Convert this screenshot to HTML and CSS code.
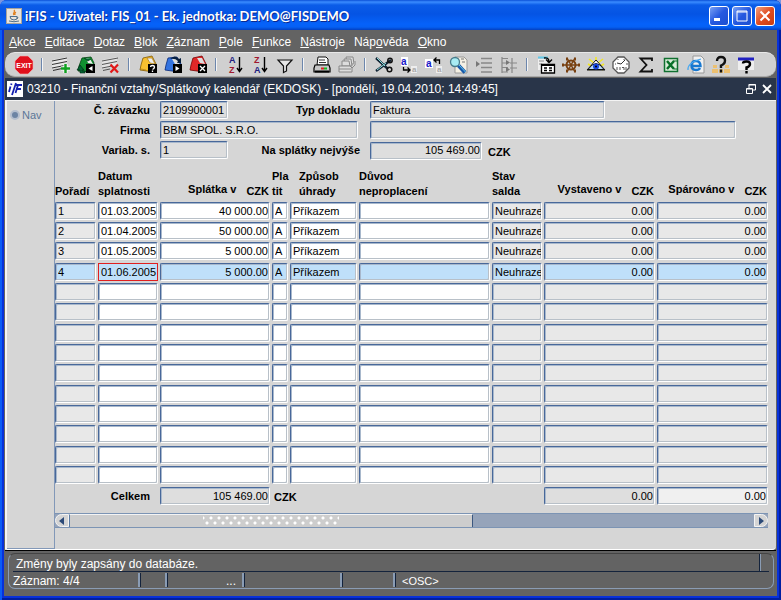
FILE: index.html
```
<!DOCTYPE html>
<html lang="cs">
<head>
    <meta charset="UTF-8">
    <meta name="viewport" content="width=device-width, initial-scale=1.0">
    <title>iFIS - Splátkový kalendář</title>
    <link rel="stylesheet" href="styles.css">
</head>
<body>
<div class="window">
    <header class="titlebar">
        <svg class="app-icon" width="16" height="16" viewBox="0 0 16 16"><rect x="0.5" y="0.5" width="15" height="15" fill="#e8e4dc" stroke="#a8a49c"/><path d="M8 2c2 2-2 3 0 5M10 4c-2 1-1 2-1 3" stroke="#e0801e" stroke-width="1.3" fill="none"/><path d="M4 8.500h7v2.500q-3 2-6 0zM11 9q2 0 0 2M3 13q5 1.500 10 0" stroke="#50708c" fill="none"/></svg>
        <h1>iFIS - Uživatel: FIS_01 - Ek. jednotka: DEMO@FISDEMO</h1>
        <button class="win-btn" aria-label="Minimalizovat"><svg width="18" height="18" viewBox="0 0 18 18"><path d="M4 12.500h6" stroke="#fff" stroke-width="3"/></svg></button>
        <button class="win-btn" aria-label="Maximalizovat"><svg width="18" height="18" viewBox="0 0 18 18"><path d="M4 4h10v10H4zM4 5h10" stroke="#fff" fill="none"/></svg></button>
        <button class="win-btn win-close" aria-label="Zavřít"><svg width="18" height="18" viewBox="0 0 18 18"><path d="M4.500 4.500l9 9M13.500 4.500l-9 9" stroke="#fff" stroke-width="2"/></svg></button>
    </header>

    <div class="frame">
        <nav class="menu">
            <a href="#"><u>A</u>kce</a>
            <a href="#"><u>E</u>ditace</a>
            <a href="#"><u>D</u>otaz</a>
            <a href="#"><u>B</u>lok</a>
            <a href="#"><u>Z</u>áznam</a>
            <a href="#"><u>P</u>ole</a>
            <a href="#"><u>F</u>unkce</a>
            <a href="#"><u>N</u>ástroje</a>
            <a href="#">Náp<u>o</u>věda</a>
            <a href="#"><u>O</u>kno</a>
        </nav>

        <div class="toolbar">
            <button aria-label="Konec"><svg viewBox="0 0 20 20"><path d="M6 1h8l5 5v8l-5 5H6l-5-5V6z" fill="#e0101c" stroke="#f4b0b0" stroke-width="0.6"/><text x="10" y="12.500" text-anchor="middle" class="exit-text">EXIT</text></svg></button>
            <span class="sep"></span>
            <button aria-label="Nový záznam"><svg viewBox="0 0 20 20"><path d="M1 5l15-3v9L1 14z" fill="#e8e8e8"/><path d="M1 6l15-3M1 9.500l15-3M1 13l15-3M2 15.500l9-2" stroke="#333" fill="none"/><path d="M14.500 9v9M10 13.500h9" stroke="#fff" stroke-width="4"/><path d="M14.500 9v9M10 13.500h9" stroke="#10a020" stroke-width="2.500"/></svg></button>
            <button aria-label="Předchozí blok"><svg viewBox="0 0 20 20"><path d="M6 3l9-1 3 6-2 9-14-1 1-5z" fill="#109030" stroke="#034010" stroke-width="0.800"/><path d="M10 3l4 1 3 5-5-1z" fill="#eee"/><path d="M8 3l4 3 3-2M4 10L1 15h3v3h5v-2H6v-1h2z" fill="#063" stroke="#021" stroke-width="0.600"/><path d="M10 9h9v9h-9z" fill="#000"/><path d="M16.500 11v5l-4-2.500z" fill="#fff"/></svg></button>
            <button aria-label="Smazat záznam"><svg viewBox="0 0 20 20"><path d="M1 5l15-3v9L1 14z" fill="#e4e4e4"/><path d="M1 6l16-3M1 9.500l15-3M1 13l10-2M2 15.500l7-1.500" stroke="#555" fill="none"/><path d="M9.500 9.500l7.500 8M17 9.500l-7.500 8" stroke="#e21818" stroke-width="2.200"/></svg></button>
            <span class="sep"></span>
            <button aria-label="Zadat dotaz"><svg viewBox="0 0 20 20"><path d="M5 3l9-2 4 8-2 8-14-2 1-5z" fill="#f8c030" stroke="#805800" stroke-width="0.800"/><path d="M9 3l5 0 3 6-5-1zM3 14l5 1" fill="#eee" stroke="#a87818" stroke-width="0.700"/><path d="M10 9h9v9h-9z" fill="#000"/><path d="M12.500 12q0-1.500 2-1.500t2 1.500-2 2.500M14.500 15.500v1.500" fill="none" stroke="#fff" stroke-width="1.300"/></svg></button>
            <button aria-label="Provést dotaz"><svg viewBox="0 0 20 20"><path d="M5 3l9-1 4 7-2 8-14-2 1-5z" fill="#3474e0" stroke="#082878" stroke-width="0.800"/><path d="M9 4l5 0 3 6-5-1z" fill="#ddd"/><path d="M7 4q5-5 9 0l2-1v5h-4l1-2q-3-3-8-2" fill="#082040"/><path d="M10 9h9v9h-9z" fill="#000"/><path d="M12.500 11v5l4-2.500z" fill="#fff"/></svg></button>
            <button aria-label="Zrušit dotaz"><svg viewBox="0 0 20 20"><path d="M5 3l9-2 4 8-2 8-14-2 1-5z" fill="#e02828" stroke="#700" stroke-width="0.800"/><path d="M9 3l5 0 3 6-5-1z" fill="#ddd"/><path d="M10 9h9v9h-9z" fill="#000"/><path d="M12 11l5 5M17 11l-5 5" stroke="#fff" stroke-width="1.300"/></svg></button>
            <span class="sep"></span>
            <button aria-label="Seřadit vzestupně"><svg viewBox="0 0 20 20"><text x="4" y="8" class="sort-text blue">A</text><text x="4" y="18" class="sort-text red">Z</text><path d="M14.500 2v14M12 13l2.500 3.500 2.500-3.500" stroke="#000" stroke-width="1.400" fill="none"/></svg></button>
            <button aria-label="Seřadit sestupně"><svg viewBox="0 0 20 20"><text x="4" y="8" class="sort-text red">Z</text><text x="4" y="18" class="sort-text blue">A</text><path d="M14.500 2v14M12 13l2.500 3.500 2.500-3.500" stroke="#000" stroke-width="1.400" fill="none"/></svg></button>
            <button aria-label="Filtr"><svg viewBox="0 0 20 20"><path d="M3 5h14l-5.500 6v5l-3 1.500V11z" fill="#e8e8e8" stroke="#111" stroke-width="1.200"/></svg></button>
            <span class="sep"></span>
            <button aria-label="Tisk"><svg viewBox="0 0 20 20"><path d="M6 2h8l2 2v6H5z" fill="#fff" stroke="#111"/><path d="M7 5h6M7 7.500h7" stroke="#333"/><path d="M3 10h14l1 3v4H2v-4z" fill="#c8c8c8" stroke="#000" stroke-width="1.200"/><path d="M3 16.500h14" stroke="#000" stroke-width="2"/><path d="M9 13.500h3" stroke="#d22" stroke-width="2"/><path d="M12 13.500h3" stroke="#1b2" stroke-width="2"/></svg></button>
            <button aria-label="Tisk více"><svg viewBox="0 0 20 20" fill="#ddd" stroke="#888"><path d="M9 2h7l1 7h-7z"/><path d="M7 4h7l1 7H8z"/><path d="M5 6h7l1 5H5z"/><path d="M2 11h11l2 2v4H2zM2 14h12M15 13l3-3v-4"/></svg></button>
            <span class="sep"></span>
            <button aria-label="Vyjmout"><svg viewBox="0 0 20 20"><path d="M2 3l12 11M2 16L17 5" stroke="#123" stroke-width="2.400"/><path d="M3 3l8 8M3 15l9-7" stroke="#8dd" stroke-width="1"/><circle cx="16" cy="5.500" r="2.200" fill="none" stroke="#111" stroke-width="1.500"/><circle cx="15.500" cy="14.500" r="2.300" fill="none" stroke="#111" stroke-width="1.500"/></svg></button>
            <button aria-label="Kopírovat"><svg viewBox="0 0 20 20"><path d="M2 2h7v9H2z" fill="#fff"/><path d="M12 11h6v7h-6z" fill="#eee"/><text x="2" y="10" class="copy-text">a</text><text x="13" y="17" class="copy-text gray">a</text><path d="M4.500 12v3h6M8.500 12.500l2.500 2.500-2.500 2.500" fill="none" stroke="#000" stroke-width="1.300"/></svg></button>
            <button aria-label="Vložit"><svg viewBox="0 0 20 20"><path d="M1 4h8v9H1z" fill="#fff"/><path d="M12 11h6v7h-6z" fill="#eee"/><text x="2" y="12" class="copy-text">a</text><text x="13" y="17" class="copy-text gray">a</text><path d="M15.500 9V5h-5M12.500 2.500L10 5l2.500 2.500" fill="none" stroke="#000" stroke-width="1.300"/></svg></button>
            <button aria-label="Hledat"><svg viewBox="0 0 20 20"><path d="M6 2h9l3 3v13H6z" fill="#f4f0e4" stroke="#999"/><path d="M12 4h3M13 7h3" stroke="#777"/><circle cx="6" cy="7" r="4.500" fill="#a8ecf4" stroke="#487c8c" stroke-width="1.300"/><path d="M9.500 10.500l6.500 7" stroke="#1858a8" stroke-width="4"/><path d="M10 10l6.500 7" stroke="#60c8f0"/></svg></button>
            <button aria-label="Vložit řádek"><svg viewBox="0 0 20 20"><path d="M7 3.500h11M7 8h11M7 12.500h11M7 17h11" stroke="#888" stroke-width="1.300"/><path d="M2 6v6l4-3z" fill="#777"/></svg></button>
            <button aria-label="Rozdělit řádek"><svg viewBox="0 0 20 20"><path d="M3 2v16M3 3.500h6M3 8h6M3 12.500h6M3 17h6M13 3v15M11 8h7M11 13h7" stroke="#888" stroke-width="1.200"/><path d="M7 5v5l4-2.500zM7 12v5l4-2.500z" fill="#777"/></svg></button>
            <span class="sep"></span>
            <button aria-label="Seznam hodnot"><svg viewBox="0 0 20 20"><path d="M2 2.500h10" stroke="#60c8e8" stroke-width="2"/><path d="M2 4h9v11H2z" fill="#eee"/><path d="M3 6h5M3 9h3" stroke="#888"/><path d="M5.500 9.500h13v8.500h-13z" fill="#fff" stroke="#000" stroke-width="1.300"/><path d="M5 10h14" stroke="#000" stroke-width="2"/><path d="M8 13h3M13 13h3M8 15.500h3M13 15.500h3" stroke="#000" stroke-width="1.300"/><path d="M8 3q5-1 5 4M10 4.500l3 3 3-3" stroke="#000" fill="none" stroke-width="1.300"/></svg></button>
            <button aria-label="Navigace"><svg viewBox="0 0 20 20" fill="none" stroke="#784010"><circle cx="10" cy="10" r="4.500" stroke-width="2"/><path d="M2 10h16M6 3l8 14M14 3L6 17" stroke-width="1.500"/><path d="M1 10h2M17 10h2M5 4h2M13 4h2M5 16h2M13 16h2" stroke-width="3"/></svg></button>
            <button aria-label="Zobrazit"><svg viewBox="0 0 20 20"><path d="M3 4l14 11M17 4L3 15M10 2v4M2 9l5 3M18 9l-5 3" stroke="#f4e820" stroke-width="1.500"/><path d="M10 5l9 10H1z" fill="#fff" stroke="#111"/><path d="M2 14.500q8-12 16 0z" fill="#b8dcff" stroke="#111"/><circle cx="10" cy="11.500" r="3" fill="#1848e0"/><circle cx="10" cy="11.500" r="1"/></svg></button>
            <button aria-label="Čas"><svg viewBox="0 0 20 20"><path d="M7 2h6l5 5v6l-5 5H7l-5-5V7z" fill="#fff" stroke="#555" stroke-width="1.300"/><path d="M6 8l4 1 4-4" stroke="#333" fill="none"/><path d="M6 12v3M9 12v3M11 12.500h2v2.500M15 12v3M4 9h1M15 9h2M7 4v1M13 4v1" stroke="#555" fill="none"/></svg></button>
            <button aria-label="Součet"><svg viewBox="0 0 20 20"><path d="M16 6V3.500H4.500l6 6.500-6 6.500H16V14" fill="none" stroke="#111" stroke-width="1.800"/></svg></button>
            <button aria-label="Export do Excelu"><svg viewBox="0 0 20 20"><path d="M3.500 3.500h13v13h-13z" fill="#d8ecd8" stroke="#107030" stroke-width="1.500"/><path d="M6 6l7 8M13 6l-7 8" stroke="#087028" stroke-width="2.500"/><path d="M12 6h4M13 14h3" stroke="#087028"/></svg></button>
            <button aria-label="Internet"><svg viewBox="0 0 20 20"><path d="M7 1h8l3 3v14H7z" fill="#f0f0f0" stroke="#999"/><path d="M4.500 11h10q0-5-4.500-5t-4.500 4.500T10 15q3 0 4-2" fill="none" stroke="#1878d0" stroke-width="2.400"/><path d="M2 15Q1 8 15 4" fill="none" stroke="#48a8f0" stroke-width="1.300"/></svg></button>
            <button aria-label="Nápověda k poli"><svg viewBox="0 0 20 20"><path d="M2 10h4v3H2zM14 10h4v3h-4zM1 14h6v4H1zM13 14h6v4h-6zM8 14h4v4H8z" fill="#ecc070"/><path d="M6 6q0-4 4-4t4 3.500-4 5V13M10 14.500v3" fill="none" stroke="#111" stroke-width="2.400"/></svg></button>
            <button aria-label="Nápověda"><svg viewBox="0 0 20 20"><path d="M2 3h16v12H2z" fill="#eee"/><path d="M2 4h16" stroke="#2020c0" stroke-width="3"/><path d="M7 8.500q0-2 3.500-2t3.500 2.500-3.500 3.500V15M10.500 16v2.500" fill="none" stroke="#000" stroke-width="2.400"/></svg></button>
        </div>

        <div class="form-title">
            <svg class="form-icon" width="16" height="16" viewBox="0 0 16 16"><path d="M0 0h16v16H0z" fill="#fff"/><path d="M3.500 5.500L2 11M4.500 2.500l-.3 1.500M9 2L5 14M9 4h6M11 4L8.500 12M10 8h4" stroke="#1420b0" stroke-width="1.800" fill="none"/></svg>
            <h2>03210 - Finanční vztahy/Splátkový kalendář (EKDOSK) - [pondělí, 19.04.2010; 14:49:45]</h2>
            <button aria-label="Obnovit"><svg width="12" height="12" viewBox="0 0 12 12" fill="none" stroke="#fff"><path d="M4 5V1.500h6.500V7H8M3.500 2h7M1.500 5.500h6v5h-6zM1.500 6h6"/></svg></button>
            <button aria-label="Zavřít formulář"><svg width="12" height="12" viewBox="0 0 12 12"><path d="M2 2l8 8M10 2l-8 8" stroke="#fff" stroke-width="1.800"/></svg></button>
        </div>

        <main class="workspace">
            <aside class="side">
                <label><input type="radio" name="nav">Nav</label>
            </aside>

            <div class="form">
                <div class="form-row">
                    <label for="zavazek">Č. závazku</label>
                    <div class="pair">
                        <input class="field short" id="zavazek" value="2109900001" readonly>
                        <label for="typ">Typ dokladu</label>
                    </div>
                    <div><input class="field medium" id="typ" value="Faktura" readonly></div>
                </div>
                <div class="form-row">
                    <label for="firma">Firma</label>
                    <div class="pair"><input class="field" id="firma" value="BBM SPOL. S.R.O." readonly></div>
                    <div class="wide"><input class="field" aria-label="Firma - doplněk" readonly></div>
                </div>
                <div class="form-row">
                    <label for="variab">Variab. s.</label>
                    <div class="pair">
                        <input class="field short" id="variab" value="1" readonly>
                        <label for="nejvyse">Na splátky nejvýše</label>
                    </div>
                    <div><input class="field amount num" id="nejvyse" value="105 469.00" readonly><b class="currency">CZK</b></div>
                </div>

                <table class="grid">
                    <colgroup>
                        <col class="c-poradi"><col class="c-datum"><col class="c-castka"><col class="c-plat"><col class="c-zpusob"><col><col class="c-stav"><col class="c-saldo"><col class="c-saldo">
                    </colgroup>
                    <thead>
                        <tr>
                            <th>Pořadí</th>
                            <th>Datum<br>splatnosti</th>
                            <th class="num">Splátka v<span class="currency">CZK</span></th>
                            <th>Pla<br>tit</th>
                            <th class="indent">Způsob<br>úhrady</th>
                            <th>Důvod<br>neproplacení</th>
                            <th>Stav<br>salda</th>
                            <th class="num">Vystaveno v<span class="currency">CZK</span></th>
                            <th class="num">Spárováno v<span class="currency">CZK</span></th>
                        </tr>
                    </thead>
                    <tbody id="rows"></tbody>
                    <tfoot>
                        <tr>
                            <td colspan="2" class="total">Celkem</td>
                            <td><input class="field num" aria-label="Celkem splátky" value="105 469.00" readonly></td>
                            <td colspan="4"><b>CZK</b></td>
                            <td><input class="field num" aria-label="Celkem vystaveno" value="0.00" readonly></td>
                            <td><input class="field num light" aria-label="Celkem spárováno" value="0.00" readonly></td>
                        </tr>
                    </tfoot>
                </table>

                <div class="scroll">
                    <button class="scroll-left" aria-label="Posun vlevo"><svg width="6" height="8" viewBox="0 0 6 8"><path d="M5 0v8L0 4z" fill="#2c4a78"/></svg></button>
                    <div class="track"><div class="thumb"><span class="grip"></span></div></div>
                    <button class="scroll-right" aria-label="Posun vpravo"><svg width="6" height="8" viewBox="0 0 6 8"><path d="M1 0v8l5-4z" fill="#2c4a78"/></svg></button>
                </div>
            </div>
        </main>

        <footer class="status">
            <div class="status-box">
                <div class="message">Změny byly zapsány do databáze.</div>
                <div class="record">
                    <span class="s-record">Záznam: 4/4</span>
                    <span class="s-small"></span>
                    <span class="s-dots">...</span>
                    <span class="s-empty"></span>
                    <span class="s-mid"></span>
                    <span class="s-osc">&lt;OSC&gt;</span>
                </div>
            </div>
        </footer>
    </div>
</div>
<script src="script.js"></script>
</body>
</html>
```

FILE: styles.css
```
* {
    box-sizing: border-box;
}

body {
    margin: 0;
    font-family: "Liberation Sans", Arial, sans-serif;
    font-size: 11px;
    color: #000;
    background-color: #7a96df;
}

button {
    border: none;
    padding: 0;
    background: none;
    cursor: pointer;
}

svg {
    display: block;
}

.window {
    display: flex;
    flex-direction: column;
    min-height: 100vh;
    padding: 0 4px 4px;
    background-color: #0831d9;
    border-radius: 7px 7px 0 0;
    box-shadow: inset 2px 0 #0a5cf5, inset -2px 0 #001ea0, inset 0 -2px #001ea0;
}

/* title bar */
.titlebar {
    display: flex;
    align-items: center;
    gap: 3px;
    height: 30px;
    margin: 0 -4px;
    padding: 2px 6px 0;
    border-radius: 7px 7px 0 0;
    background: linear-gradient(#0a50d8 0, #3a8cff 2px, #0a5ce8 5px, #0554e4 14px, #0562fa 24px, #0560f4 27px, #0340c0 30px);
}

.titlebar h1 {
    flex: 1;
    margin: 0;
    font-family: Lato, sans-serif;
    font-size: 13px;
    font-weight: bold;
    color: #fff;
    text-shadow: 1px 1px #0a2a90;
    white-space: nowrap;
}

.win-btn {
    width: 20px;
    height: 20px;
    border: 1px solid #fff;
    border-radius: 3px;
    background: linear-gradient(135deg, #7aa0f4, #2558e0 50%, #1c50d0);
}

.win-close {
    background: linear-gradient(135deg, #f0a080, #e04c20 50%, #c83c10);
}

.frame {
    flex: 1;
    display: flex;
    flex-direction: column;
    padding: 0 1px;
    background-color: #636363;
}

/* menu */
.menu {
    display: flex;
    gap: 9px;
    height: 22px;
    padding: 0 4px;
    line-height: 24px;
    font-size: 12px;
}

.menu a {
    color: #fff;
    text-decoration: none;
}

/* toolbar */
.toolbar {
    display: flex;
    align-items: center;
    height: 25px;
    padding-left: 6px;
    background-color: #d0d0d0;
    border-top: 1px solid #e8e8e8;
    border-bottom: 1px solid #aaa;
    border-radius: 10px;
}

.toolbar button {
    width: 25px;
}

.toolbar svg {
    width: 20px;
    height: 20px;
    margin: 0 auto;
}

.sep {
    width: 2px;
    height: 13px;
    margin: 0 5px;
    background-color: #6c86ac;
    border-right: 1px solid #f4f4f4;
}

.exit-text {
    font-size: 7px;
    font-weight: bold;
    fill: #fff;
}

.sort-text {
    font-size: 9px;
    font-weight: bold;
}

.copy-text {
    font-size: 10px;
    font-weight: bold;
    fill: #1818c8;
}

.blue {
    fill: #202080;
}

.red {
    fill: #a01830;
}

.gray {
    font-size: 8px;
    fill: #aaa;
}

/* form title */
.form-title {
    display: flex;
    align-items: center;
    gap: 4px;
    height: 22px;
    margin-top: 1px;
    padding: 0 3px 0 2px;
    background-color: #293549;
}

.form-title h2 {
    flex: 1;
    margin: 0;
    font-size: 12px;
    font-weight: normal;
    line-height: 22px;
    color: #fff;
    white-space: nowrap;
}

/* work area */
.workspace {
    flex: 1;
    display: flex;
    background-color: #d6d6d6;
    border-top: 1px solid #f4f4f4;
    border-left: 2px solid #f4f4f4;
    border-bottom: 1px solid #fff;
    border-bottom-right-radius: 4px;
}

.side {
    width: 48px;
    padding: 8px 3px;
    border-right: 1px solid #8298b8;
    border-bottom: 1px solid #8298b8;
    color: #5c7698;
}

.side label {
    display: flex;
    align-items: center;
    gap: 2px;
}

.side input {
    appearance: none;
    width: 10px;
    height: 10px;
    margin: 0;
    border: 2px solid #b4bece;
    border-radius: 50%;
    background-color: #6c84a4;
}

.form {
    flex: 1;
    padding-right: 6px;
}

.form-row {
    display: grid;
    grid-template-columns: 105px 210px 1fr;
    height: 20px;
    line-height: 18px;
}

.form-row label {
    padding-right: 10px;
    font-weight: bold;
    text-align: right;
}

.pair {
    display: flex;
    justify-content: space-between;
}

.form-row .pair .field:only-child {
    margin-right: 12px;
}

.form-row .wide {
    padding-right: 34px;
}

.field {
    display: block;
    width: 100%;
    height: 18px;
    padding: 0 0 1px 2px;
    border: 1px solid;
    border-color: #48689a #fff #fff #48689a;
    border-radius: 2px;
    background-color: #dedede;
    font-family: inherit;
    font-size: 11px;
    color: #000;
    box-shadow: inset 1px 1px #a8b8cc, inset -1px -1px #b8c0c8;
}

.form-row .short {
    width: 68px;
}

.form-row .medium {
    width: 235px;
}

.form-row .amount {
    display: inline-block;
    width: 112px;
}

.num,
.field.num {
    text-align: right;
}

.field.num {
    padding-right: 1px;
}

.currency {
    margin-left: 6px;
    vertical-align: -2px;
}

/* instalments */
.grid {
    width: 100%;
    table-layout: fixed;
    border-collapse: collapse;
}

.c-poradi { width: 43px; }
.c-datum { width: 62px; }
.c-castka { width: 112px; }
.c-plat { width: 18px; }
.c-zpusob { width: 69px; }
.c-stav { width: 52px; }
.c-saldo { width: 113px; }

.grid th {
    height: 41px;
    padding: 0 0 3px;
    line-height: 15px;
    text-align: left;
    vertical-align: bottom;
    white-space: nowrap;
}

.grid th.num {
    padding-right: 3px;
    text-align: right;
}

.grid th.indent {
    padding-left: 9px;
}

.grid th .currency {
    margin-left: 10px;
}

.grid td {
    height: 20px;
    padding: 0 2px 0 0;
    vertical-align: top;
}

.grid tbody tr:nth-child(3n) td {
    height: 21px;
}

.grid tbody .field {
    background-color: #e8e8e8;
}

.grid tbody .edit {
    background-color: #fff;
}

.grid .field.light {
    background-color: #f0f0f0;
}

.grid tbody .current .field {
    background-color: #bfe0fa;
}

.grid .current .focus {
    border: 1px solid #e02020;
    border-radius: 0;
    box-shadow: none;
}

.grid tfoot td {
    padding-top: 1px;
    line-height: 18px;
}

.grid .total {
    padding-right: 10px;
    font-weight: bold;
    text-align: right;
}

.grid tfoot b {
    margin-left: 2px;
    vertical-align: -1px;
}

/* scrollbar */
.scroll {
    display: flex;
    height: 15px;
    margin: 7px 2px 0 0;
    border-top: 1px solid #7c94b4;
    border-bottom: 1px solid #7c94b4;
    background-color: #96a4ba;
}

.scroll button {
    display: flex;
    align-items: center;
    justify-content: center;
    width: 14px;
    background-color: #d4d4d4;
    border: 1px solid #f4f4f4;
}

.scroll-left {
    border-radius: 7px 0 0 7px;
}

.scroll-right {
    border-radius: 0 7px 7px 0;
}

.track {
    flex: 1;
}

.thumb {
    display: flex;
    align-items: center;
    justify-content: center;
    width: 59%;
    height: 100%;
    background-color: #cdcdcd;
    border-top: 1px solid #f4f4f4;
    border-left: 1px solid #5c7ca4;
    border-right: 1px solid #3c5880;
}

.grip {
    width: 136px;
    height: 10px;
    background-image: radial-gradient(circle, #fff 1px, transparent 2px), radial-gradient(circle, #fff 1px, transparent 2px);
    background-size: 8px 10px;
    background-position: 0 2px, 4px -3px;
}

/* status bar */
.status {
    padding: 2px 2px 7px 3px;
    border-top: 1px solid #000;
    color: #fff;
}

.status-box {
    border: 1px solid #8a9cb4;
    border-top-color: #444;
    border-radius: 7px;
}

.message {
    height: 18px;
    margin: 0 4px;
    padding-left: 3px;
    line-height: 20px;
    font-size: 12px;
    border-bottom: 1px solid #14233c;
    background: linear-gradient(90deg, #14233c 1px, #8a9cb4 1px) no-repeat right 8px top / 2px 100%;
}

.record {
    display: flex;
    height: 16px;
    padding: 1px 4px;
    line-height: 16px;
    font-size: 12px;
}

.record span {
    border-right: 2px solid #8a9cb4;
    box-shadow: 1px 0 #14233c;
}

.s-record {
    width: 127px;
}

.s-small {
    width: 27px;
}

.s-dots {
    width: 77px;
    padding-right: 6px;
    text-align: right;
}

.s-empty {
    width: 98px;
}

.s-mid {
    width: 53px;
}

.record .s-osc {
    padding-left: 7px;
    border: none;
    box-shadow: none;
    font-size: 11px;
}
```

FILE: script.js
```
const ROW_COUNT = 14;
const splatky = [
    ["1", "01.03.2005", "40 000.00", "A", "Příkazem", "", "Neuhraze", "0.00", "0.00"],
    ["2", "01.04.2005", "50 000.00", "A", "Příkazem", "", "Neuhraze", "0.00", "0.00"],
    ["3", "01.05.2005", "5 000.00", "A", "Příkazem", "", "Neuhraze", "0.00", "0.00"],
    ["4", "01.06.2005", "5 000.00", "A", "Příkazem", "", "Neuhraze", "0.00", "0.00"]
];
const columns = [
    { label: "Pořadí", cls: "" },
    { label: "Datum splatnosti", cls: "edit" },
    { label: "Splátka", cls: "edit num" },
    { label: "Platit", cls: "edit" },
    { label: "Způsob úhrady", cls: "edit" },
    { label: "Důvod neproplacení", cls: "edit" },
    { label: "Stav salda", cls: "" },
    { label: "Vystaveno", cls: "num" },
    { label: "Spárováno", cls: "num" }
];

const tbody = document.getElementById("rows");
for (let i = 0; i < ROW_COUNT; i++) {
    const tr = document.createElement("tr");
    if (i === 3) tr.className = "current";
    columns.forEach((col, c) => {
        const td = document.createElement("td");
        const input = document.createElement("input");
        input.className = "field " + col.cls;
        if (i === 3 && c === 1) input.className += " focus";
        input.value = splatky[i] ? splatky[i][c] : "";
        input.readOnly = !col.cls.includes("edit");
        input.setAttribute("aria-label", col.label + " " + (i + 1));
        td.appendChild(input);
        tr.appendChild(td);
    });
    tbody.appendChild(tr);
}
```
